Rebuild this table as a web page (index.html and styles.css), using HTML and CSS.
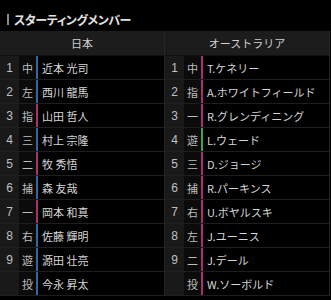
FILE: index.html
```html
<!DOCTYPE html>
<html lang="ja">
<head>
<meta charset="utf-8">
<link rel="stylesheet" href="styles.css">
</head>
<body>
<div class="title"><span class="title-bar"></span><span class="title-text">スターティングメンバー</span></div>
<div class="tables">
  <div class="team">
    <div class="head">日本</div>
    <div class="row"><span class="num">1</span><span class="pos">中</span><span class="name r">近本 光司</span></div>
    <div class="row"><span class="num">2</span><span class="pos">左</span><span class="name r">西川 龍馬</span></div>
    <div class="row"><span class="num">3</span><span class="pos">指</span><span class="name l">山田 哲人</span></div>
    <div class="row"><span class="num">4</span><span class="pos">三</span><span class="name r">村上 宗隆</span></div>
    <div class="row"><span class="num">5</span><span class="pos">二</span><span class="name l">牧 秀悟</span></div>
    <div class="row"><span class="num">6</span><span class="pos">捕</span><span class="name r">森 友哉</span></div>
    <div class="row"><span class="num">7</span><span class="pos">一</span><span class="name l">岡本 和真</span></div>
    <div class="row"><span class="num">8</span><span class="pos">右</span><span class="name r">佐藤 輝明</span></div>
    <div class="row"><span class="num">9</span><span class="pos">遊</span><span class="name r">源田 壮亮</span></div>
    <div class="row"><span class="num"></span><span class="pos">投</span><span class="name r">今永 昇太</span></div>
  </div>
  <div class="team">
    <div class="head">オーストラリア</div>
    <div class="row"><span class="num">1</span><span class="pos">中</span><span class="name l">T.ケネリー</span></div>
    <div class="row"><span class="num">2</span><span class="pos">指</span><span class="name l">A.ホワイトフィールド</span></div>
    <div class="row"><span class="num">3</span><span class="pos">一</span><span class="name l">R.グレンディニング</span></div>
    <div class="row"><span class="num">4</span><span class="pos">遊</span><span class="name s">L.ウェード</span></div>
    <div class="row"><span class="num">5</span><span class="pos">三</span><span class="name l">D.ジョージ</span></div>
    <div class="row"><span class="num">6</span><span class="pos">捕</span><span class="name l">R.パーキンス</span></div>
    <div class="row"><span class="num">7</span><span class="pos">右</span><span class="name l">U.ボヤルスキ</span></div>
    <div class="row"><span class="num">8</span><span class="pos">左</span><span class="name l">J.ユーニス</span></div>
    <div class="row"><span class="num">9</span><span class="pos">二</span><span class="name l">J.デール</span></div>
    <div class="row"><span class="num"></span><span class="pos">投</span><span class="name l">W.ソーボルド</span></div>
  </div>
</div>
</body>
</html>
```
FILE: styles.css
```css
html, body {
  margin: 0;
  padding: 0;
  background: #000;
}
body {
  width: 331px;
  height: 300px;
  overflow: hidden;
  font-family: "Noto Sans CJK JP", "Noto Sans", sans-serif;
  color: #d0d0d0;
}
.title {
  height: 31px;
  display: flex;
  align-items: center;
  padding-left: 7px;
  box-sizing: border-box;
  padding-top: 8px;
}
.title-bar {
  width: 2px;
  height: 11px;
  background: #8a8a8a;
  margin-right: 5px;
}
.title-text {
  font-size: 12px;
  font-weight: bold;
  color: #e2e2e2;
  font-feature-settings: "palt";
  letter-spacing: -0.4px;
}
.tables {
  display: grid;
  grid-template-columns: 165px 165px;
}
.team {
  border-right: 1px solid #262626;
}
.head {
  height: 24px;
  background: #1c1c1c;
  border-bottom: 1px solid #101010;
  display: flex;
  align-items: center;
  justify-content: center;
  font-size: 11px;
  color: #cfcfcf;
}
.row {
  height: 23px;
  display: flex;
  border-bottom: 1px solid #1e1e1e;
  font-size: 11px;
}
.num {
  width: 19px;
  flex: none;
  background: #191919;
  display: flex;
  align-items: center;
  justify-content: center;
  color: #c0c0c0;
  font-family: "Liberation Sans", "Noto Sans", sans-serif;
  font-size: 12px;
}
.pos {
  width: 17px;
  flex: none;
  background: #0b0b0b;
  display: flex;
  align-items: center;
  justify-content: center;
  color: #bdbdbd;
}
.name {
  flex: 1;
  display: flex;
  align-items: center;
  padding-left: 4px;
  border-left: 2px solid #2a5f94;
  color: #d6d6d6;
  white-space: nowrap;
}
.name.r { border-left-color: #2d6aa2; }
.name.l { border-left-color: #a8306e; }
.name.s { border-left-color: #3fa35a; }
```
